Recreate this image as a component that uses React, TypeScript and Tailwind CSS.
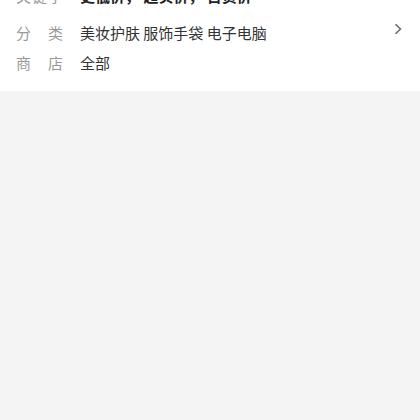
import React from 'react';

const rows = [
    { label: ['关', '键', '字'], value: '更低价， 超实价， 百货价', bold: true },
    { label: ['分', '类'], value: '美妆护肤 服饰手袋 电子电脑', arrow: true },
    { label: ['商', '店'], value: '全部' },
];

const Chevron = () => (
    <svg width="10" height="12" viewBox="0 0 10 12" className="text-[#666]">
        <path d="M2.5 1.2 L7.5 6 L2.5 10.8" fill="none" stroke="currentColor" strokeWidth="1.5" />
    </svg>
);

const App: React.FC = () => {
    return (
        <div
            className="w-[420px] h-[420px] overflow-hidden bg-[#f4f4f4]"
            style={{ fontFamily: '"Noto Sans CJK SC", "Noto Sans", sans-serif' }}
        >
            <div className="bg-white pb-[13px]">
                <div className="-mt-[19px]">
                    {rows.map((row, i) => (
                        <div
                            key={i}
                            className={`flex items-center h-[30px] pl-[16px] pr-[16px] text-[15px] ${i === 1 ? 'mt-[7px]' : ''}`}
                        >
                            <div className="w-[47px] flex justify-between text-[#999]">
                                {row.label.map((c, j) => (
                                    <span key={j}>{c}</span>
                                ))}
                            </div>
                            <div
                                className={`ml-[17px] flex-1 ${row.bold ? 'font-bold text-[#222]' : 'text-[#333]'}`}
                            >
                                {row.value}
                            </div>
                            {row.arrow && (
                                <div className="-mt-[9px] mr-[1px]">
                                    <Chevron />
                                </div>
                            )}
                        </div>
                    ))}
                </div>
            </div>
        </div>
    );
};

export default App;
